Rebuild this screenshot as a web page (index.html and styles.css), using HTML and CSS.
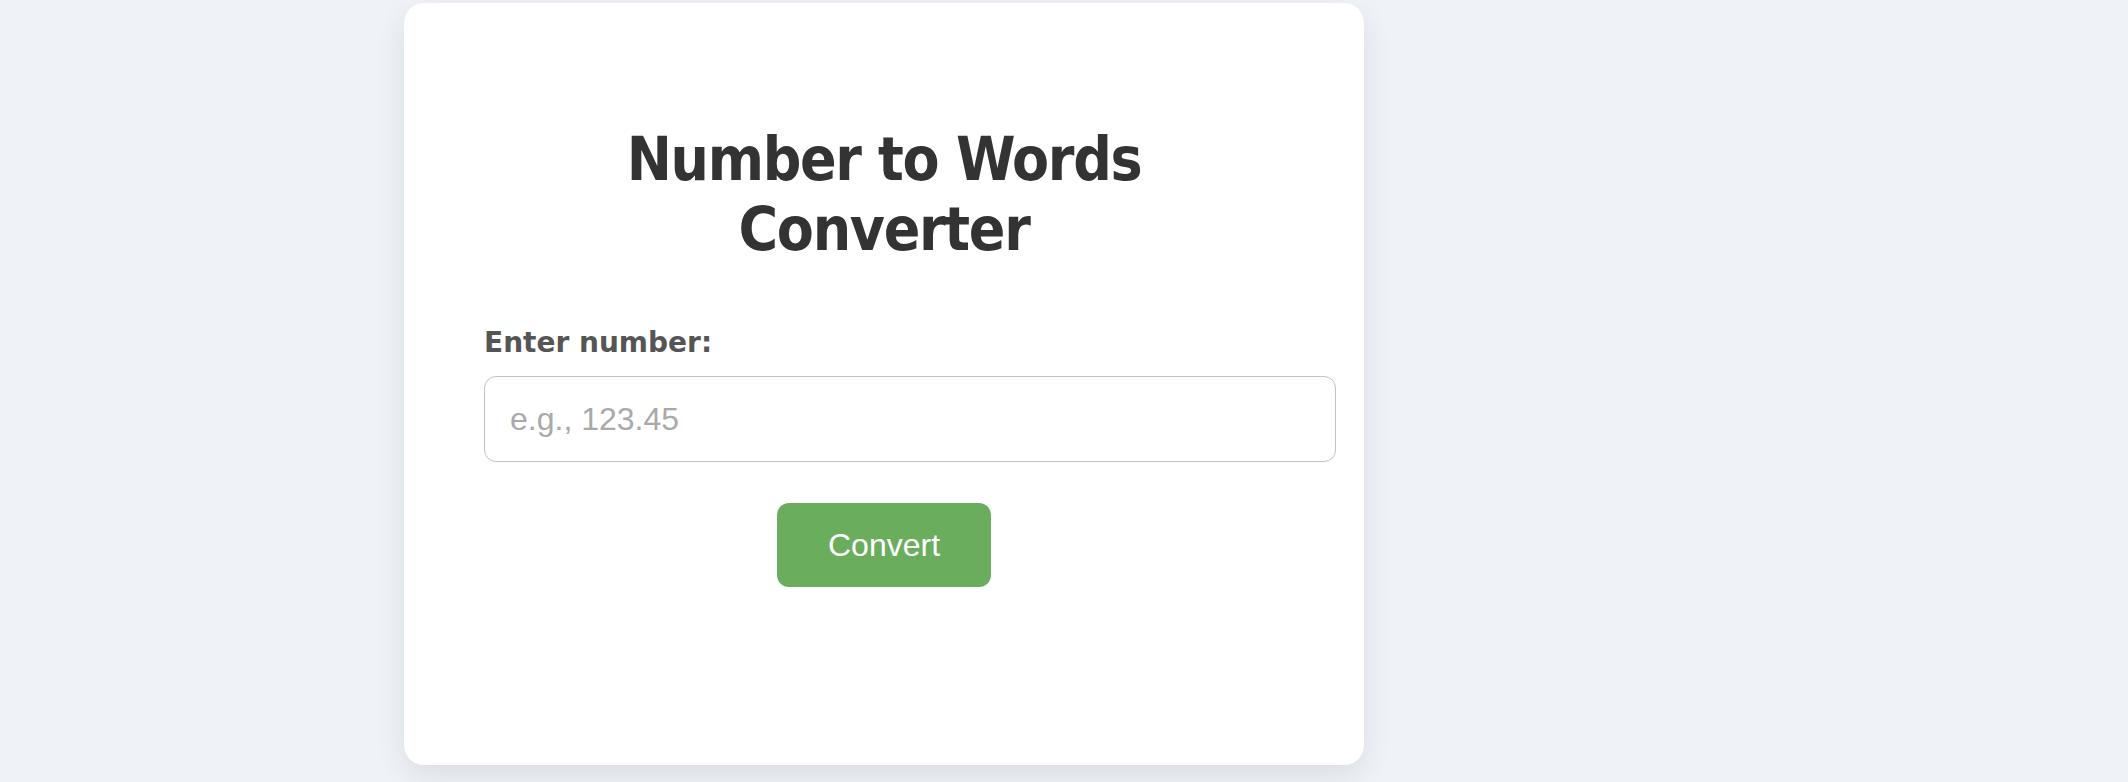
FILE: index.html
```html
<!DOCTYPE html>
<html lang="en">
<head>
<meta charset="utf-8">
<title>Number to Words Converter</title>
<link rel="stylesheet" href="styles.css">
</head>
<body>
  <main class="page">
    <section class="card">
      <h1 class="title">Number to Words Converter</h1>
      <label class="label" for="num">Enter number:</label>
      <input class="input" id="num" type="text" placeholder="e.g., 123.45">
      <div class="actions">
        <button class="btn" type="button">Convert</button>
      </div>
      <div class="result"></div>
    </section>
  </main>
</body>
</html>
```

FILE: styles.css
```css
html, body {
  margin: 0;
  padding: 0;
}
body {
  background: #eff2f7;
  height: 782px;
  overflow: hidden;
}
.page {
  display: flex;
  padding: 3px 0 0 404px;
}
.card {
  width: 960px;
  height: 762px;
  box-sizing: border-box;
  background: #ffffff;
  border-radius: 20px;
  box-shadow: 0 10px 30px rgba(0, 0, 0, 0.09);
  padding: 121px 80px 0 80px;
  display: flex;
  flex-direction: column;
}
.title {
  margin: 0;
  width: 800px;
  text-align: center;
  font-family: "DejaVu Sans Condensed", "DejaVu Sans", sans-serif;
  font-weight: bold;
  font-size: 60px;
  line-height: 70px;
  letter-spacing: -1.3px;
  color: #333333;
}
.label {
  margin-top: 62px;
  font-family: "DejaVu Sans", sans-serif;
  font-weight: bold;
  font-size: 28px;
  line-height: 34px;
  color: #555555;
}
.input {
  margin-top: 16px;
  width: 852px;
  height: 86px;
  box-sizing: border-box;
  border: 1px solid #c2c2c2;
  border-radius: 12px;
  padding: 0 25px;
  font-family: "Liberation Sans", Arial, sans-serif;
  font-size: 32px;
  color: #333333;
  background: #ffffff;
  outline: none;
}
.input::placeholder {
  color: #a9a9a9;
}
.actions {
  display: flex;
  justify-content: center;
  width: 800px;
  margin-top: 41px;
}
.btn {
  width: 214px;
  height: 84px;
  border: none;
  border-radius: 12px;
  background: #69ad5d;
  color: #ffffff;
  font-family: "Liberation Sans", Arial, sans-serif;
  font-size: 32px;
  cursor: pointer;
  padding: 0;
}
```
